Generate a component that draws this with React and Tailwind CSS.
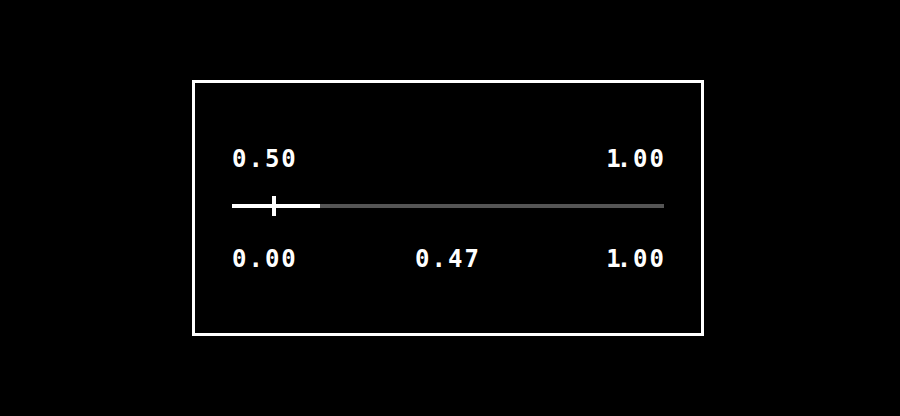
const font = { fontFamily: '"DejaVu Sans Mono", "Liberation Mono", monospace' };

// the reference uses a pixel font whose "1" is narrower than the other digits
const Label = ({ text, right }) => (
  <span
    className={`text-[24px] leading-[24px] font-bold tracking-[2px] text-white ${right ? 'mr-[-2px]' : ''}`}
  >
    {text.split('').map((ch, i) =>
      ch === '1' ? (
        <span key={i} className="tracking-[-4px]">1</span>
      ) : (
        <span key={i}>{ch}</span>
      )
    )}
  </span>
);

export default function App() {
  return (
    <div className="w-[900px] h-[416px] bg-black flex items-center justify-center" style={font}>
      <div className="w-[512px] h-[256px] border-[3px] border-white flex flex-col px-[37px] pt-[64px] ml-[-4px]">
        <div className="flex justify-between">
          <Label text="0.50" />
          <Label text="1.00" right />
        </div>

        <div className="relative h-[20px] mt-[25px] flex items-center">
          <div className="h-[4px] w-[88px] bg-white" />
          <div className="h-[4px] flex-1 bg-[#555555]" />
          <div className="absolute left-[40px] top-0 w-[4px] h-[20px] bg-white" />
        </div>

        <div className="grid grid-cols-3 mt-[31px]">
          <div className="flex justify-start">
            <Label text="0.00" />
          </div>
          <div className="flex justify-center">
            <Label text="0.47" />
          </div>
          <div className="flex justify-end">
            <Label text="1.00" right />
          </div>
        </div>
      </div>
    </div>
  );
}
